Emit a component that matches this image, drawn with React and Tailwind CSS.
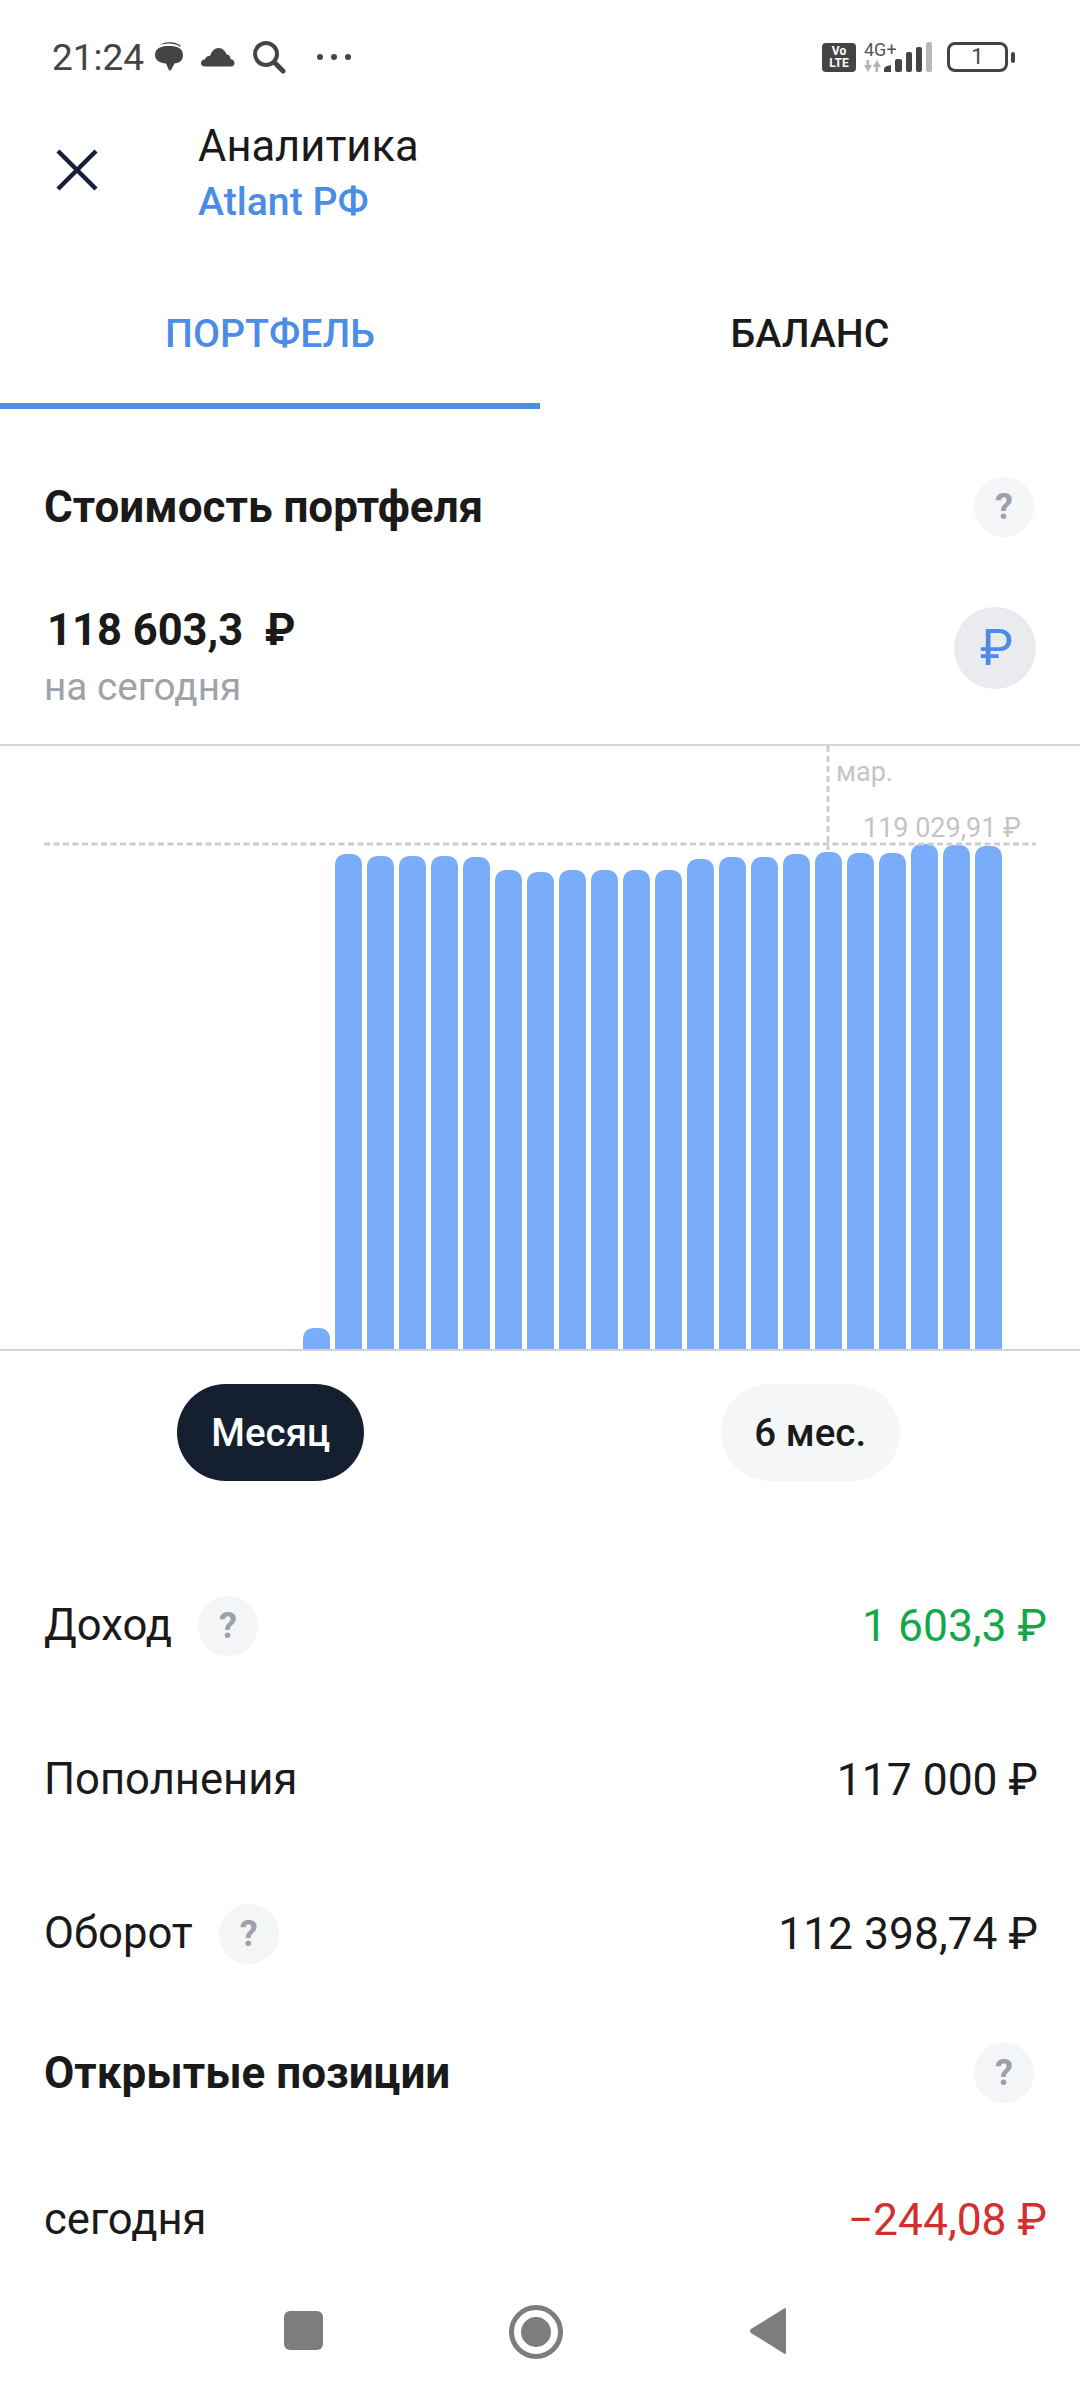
const FONT = "font-['Roboto','Noto_Sans',sans-serif]";
const tops = [1328,854,856,856,856,857,870,872,870,870,870,870,859,857,857,854,852,853,853,844,845,846];
const BASE = 1349;

function Q({ className = "" }) {
  return (
    <div className={`w-[60px] h-[60px] rounded-full bg-[#f4f5f6] flex items-center justify-center text-[#9ca0aa] font-bold text-[36px] leading-none ${className}`}>?</div>
  );
}

function StatusBar() {
  return (
    <div className="h-[114px] shrink-0 flex items-center justify-between pl-[52px] pr-[65px] text-[#444444]">
      <div className="flex items-center">
        <span className="text-[37px] leading-none">21:24</span>
        <svg className="ml-[10px]" width="30" height="32" viewBox="0 0 30 32" fill="#444">
          <path d="M6 4.500C8 2 11 1.200 15 1.200c5.500 0 10 1.500 12 4l-1.500.3C23 3.400 19 2.600 15 2.600c-4 0-7 .7-9 1.900z" />
          <path d="M14 5c8 0 15 1.500 15 9S23 22 20.500 22.500L17 29c-1.200.9-1.800.5-2.400-.4L12 22.500C6 22 1 19.500 1 14 1 7.500 7 5 14 5z" />
        </svg>
        <svg className="ml-[17px]" width="34" height="20" viewBox="0 0 34 20" fill="#444">
          <path d="M4 19.500C1.500 19.500 0 18 0 16c0-2 1.500-3.500 4-3.800C5 9.500 7 8.500 9 9c1.500-5 5-8 8.500-8 4 0 7 3 8 6.500 2.500 0 4 2 4 4.500 2.500.5 4 2 4 4 0 2.200-1.500 3.500-3.500 3.500z" />
        </svg>
        <svg className="ml-[17px]" width="34" height="34" viewBox="0 0 34 34" fill="none" stroke="#444" strokeLinecap="round">
          <circle cx="14" cy="14" r="11" strokeWidth="4" />
          <path d="M22.500 22.500L31 31" strokeWidth="5" />
        </svg>
        <svg className="ml-[30px]" width="36" height="8" viewBox="0 0 36 8" fill="#444">
          <circle cx="4" cy="4" r="3" />
          <circle cx="18" cy="4" r="3" />
          <circle cx="32" cy="4" r="3" />
        </svg>
      </div>
      <div className="flex items-center">
        <div className="w-[34px] h-[29px] rounded-[4px] bg-[#444444] text-white text-[12px] font-bold leading-[12px] flex flex-col items-center justify-center">
          <span>Vo</span>
          <span>LTE</span>
        </div>
        <div className="ml-[8px] relative w-[36px] h-[30px] text-[#555]">
          <span className="absolute left-0 top-[-1px] text-[18px] leading-[18px]">4G+</span>
          <svg className="absolute left-0 top-[18px]" width="17" height="12" viewBox="0 0 17 12" fill="#b4b4b4">
            <path d="M0 5h2.500V0h2.500v5H8L4 12z" />
            <path d="M9 7h2.500v5H14V7h3L13 0z" />
          </svg>
        </div>
        <svg className="ml-[-16px]" width="48" height="30" viewBox="0 0 48 30">
          <path d="M0 30v-3q0-3 7-4v7z" fill="#444" />
          <rect x="11" y="17" width="7" height="13" rx="2" fill="#444" />
          <rect x="22" y="10" width="6" height="20" rx="2" fill="#444" />
          <rect x="32" y="5" width="6" height="25" rx="2" fill="#444" />
          <rect x="42" y="0" width="6" height="30" rx="2" fill="#b8b8b8" />
        </svg>
        <div className="ml-[15px] w-[61px] h-[30px] rounded-[8px] border-[3px] border-[#444444] flex items-center justify-center text-[22px] leading-none text-[#444]">1</div>
        <div className="ml-[3px] w-[4px] h-[11px] rounded-[2px] bg-[#444444]" />
      </div>
    </div>
  );
}

function Header() {
  return (
    <div className="h-[112px] shrink-0 flex">
      <div className="w-[198px] pl-[56px] pt-[35px]">
        <svg width="42" height="42" viewBox="0 0 42 42" fill="none" stroke="#16203a" strokeWidth="4.500">
          <path d="M2 2L40 40M40 2L2 40" />
        </svg>
      </div>
      <div>
        <div className="text-[43.500px] leading-[50px] text-[#1a1a1a] mt-[8px]">Аналитика</div>
        <div className="text-[39.200px] leading-[44px] text-[#4a8ce6] font-medium mt-[8px] whitespace-nowrap">Atlant РФ</div>
      </div>
    </div>
  );
}

function Tabs() {
  return (
    <div className="h-[183px] shrink-0 pt-[46px] flex">
      <div className="w-[540px] h-[137px] border-b-[6px] border-[#4a8ce6] flex justify-center text-[39.300px] leading-[44px] font-medium text-[#4a8ce6] pt-[40px]">ПОРТФЕЛЬ</div>
      <div className="w-[540px] flex justify-center text-[39.300px] leading-[44px] font-medium text-[#1a1a1a] pt-[40px]">БАЛАНС</div>
    </div>
  );
}

function Chart() {
  return (
    <div className="relative h-[607px] shrink-0 border-y-2 border-[#d4d4d6]">
      <div className="absolute left-[303px] bottom-0 flex items-end gap-[5px]">
        {tops.map((t, i) => (
          <div key={i} className="w-[27px] rounded-t-[10px] bg-[#7aadf9]" style={{ height: BASE - t }} />
        ))}
      </div>
      <svg className="absolute left-0 top-0" width="1080" height="120" fill="none" stroke="#cdcdcd">
        <path d="M828 0V104" strokeWidth="3" strokeDasharray="6 4" />
        <path d="M44 98H1036" strokeWidth="3" strokeDasharray="6 3.500" />
      </svg>
      <span className="absolute left-[836px] top-[10px] text-[27px] leading-[32px] text-[#c4c4c4]">мар.</span>
      <span className="absolute right-[59px] top-[65px] text-[27px] leading-[34px] text-[#c4c4c4] whitespace-nowrap">119 029,91 ₽</span>
    </div>
  );
}

function Row({ label, value, q, color = "text-[#1a1a1a]", className = "" }) {
  return (
    <div className={`flex items-center justify-between pl-[44px] ${className}`}>
      <div className="flex items-center">
        <span className="text-[43.600px] leading-[50px] text-[#1a1a1a]">{label}</span>
        {q && <Q className="ml-[26px]" />}
      </div>
      <span className={`text-[44.400px] leading-[50px] whitespace-nowrap ${color}`}>{value}</span>
    </div>
  );
}

export default function App() {
  return (
    <div className={`${FONT} relative w-[1080px] h-[2400px] bg-white overflow-hidden flex flex-col`}>
      <StatusBar />
      <Header />
      <Tabs />
      <div className="h-[335px] shrink-0">
        <div className="flex items-center justify-between pl-[44px] pr-[46px] pt-[68px]">
          <span className="text-[44px] leading-[48px] font-bold text-[#1a1a1a]">Стоимость портфеля</span>
          <Q />
        </div>
        <div className="flex items-start justify-between pl-[44px] pr-[44px] mt-[70px]">
          <div className="mt-[-1px]">
            <div className="text-[43.500px] leading-[50px] font-bold text-[#1a1a1a] ml-[3px] whitespace-pre">118 603,3  ₽</div>
            <div className="text-[38.700px] leading-[44px] text-[#9ea2a9] mt-[9px]">на сегодня</div>
          </div>
          <div className="w-[82px] h-[82px] rounded-full bg-[#e9ebee] flex items-center justify-center text-[50px] leading-none text-[#4a8ce6] pl-[3px]">₽</div>
        </div>
      </div>
      <Chart />
      <div className="flex shrink-0 h-[97px] mt-[33px] pl-[1px]">
        <div className="w-[540px] flex justify-center">
          <div className="w-[187px] h-[97px] rounded-full bg-[#141f30] text-white text-[38.500px] font-medium flex items-center justify-center">Месяц</div>
        </div>
        <div className="w-[540px] flex justify-center">
          <div className="w-[179px] h-[97px] rounded-full bg-[#f5f6f7] text-[#1a1a1a] text-[38.500px] font-medium flex items-center justify-center">6 мес.</div>
        </div>
      </div>
      <Row className="mt-[115px] pr-[33px]" label="Доход" q value="1 603,3 ₽" color="text-[#12a84a]" />
      <Row className="mt-[99px] pr-[42px]" label="Пополнения" value="117 000 ₽" />
      <Row className="mt-[99px] pr-[42px]" label="Оборот" q value="112 398,74 ₽" />
      <div className="flex items-center justify-between pl-[44px] pr-[46px] mt-[79px]">
        <span className="text-[44px] leading-[48px] font-bold text-[#1a1a1a]">Открытые позиции</span>
        <Q />
      </div>
      <Row className="mt-[92px] pr-[33px]" label="сегодня" value="−244,08 ₽" color="text-[#d32f2f]" />
      <div className="absolute left-0 right-0 bottom-0 h-[120px] bg-white">
        <div className="absolute left-[284px] top-[31px] w-[39px] h-[39px] rounded-[6px] bg-[#7d7d7d]" />
        <div className="absolute left-[509px] top-[25px] w-[54px] h-[54px] rounded-full border-[5px] border-[#7d7d7d] flex items-center justify-center">
          <div className="w-[30px] h-[30px] rounded-full bg-[#7d7d7d]" />
        </div>
        <svg className="absolute left-[749px] top-[27px]" width="38" height="48" viewBox="0 0 38 48" fill="#7d7d7d">
          <path d="M35 1.500Q37 0 37 3V45Q37 48 35 46.500L2 26Q0 24 2 22z" />
        </svg>
      </div>
    </div>
  );
}
